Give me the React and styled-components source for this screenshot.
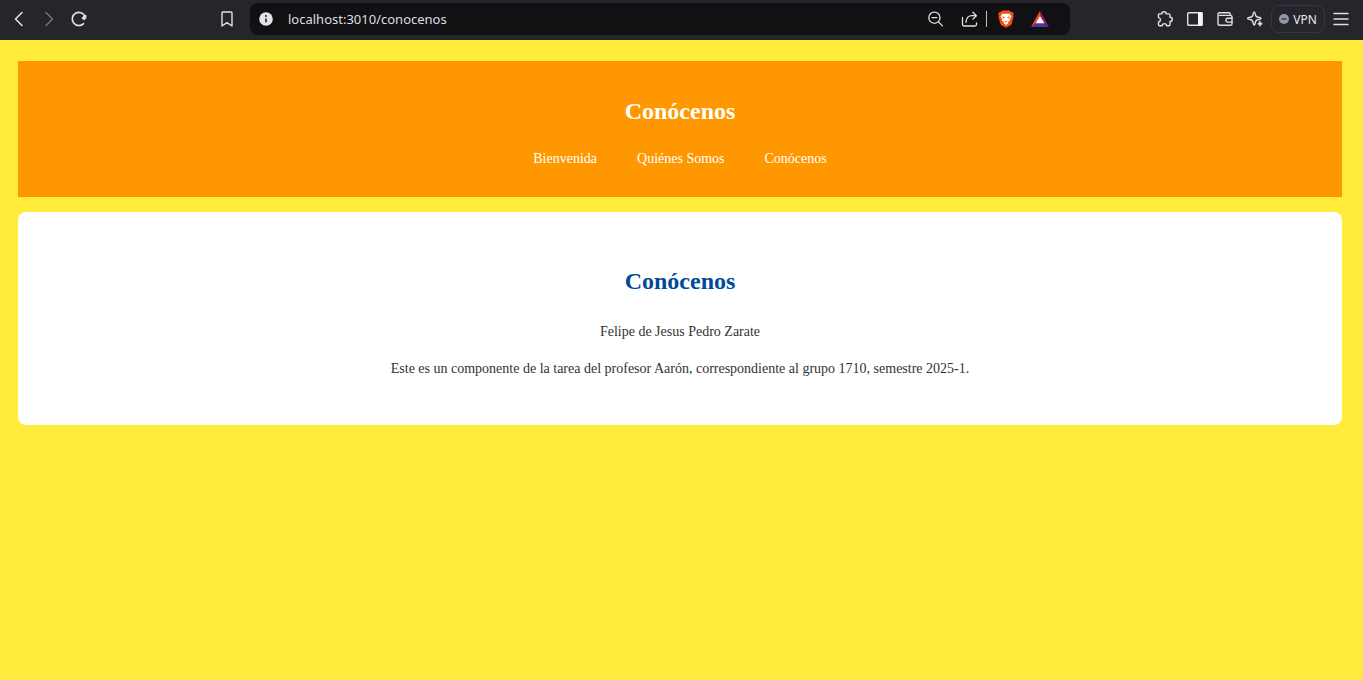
import React from 'react';
import styled, { createGlobalStyle } from 'styled-components';

const GlobalStyle = createGlobalStyle`
  *, *::before, *::after { box-sizing: border-box; }
  html { background: #ffeb3b; }
  body {
    margin: 0;
    background: #ffeb3b;
    color: #333;
    font-family: "Liberation Serif", "Times New Roman", serif;
    font-size: 14px;
  }
`;

const Toolbar = styled.div`
  display: grid;
  grid-template-columns: 250px minmax(0, 1fr) 293px;
  align-items: center;
  height: 40px;
  padding-bottom: 2px;
  background: #25252b;
  font-family: "Noto Sans", "Open Sans", sans-serif;
`;

const ToolGroup = styled.div`
  display: flex;
  align-items: center;
  justify-content: ${({ $end }) => ($end ? 'flex-end' : 'space-between')};
  padding: ${({ $end }) => ($end ? '0 7px 0 0' : '0 8px 0 4px')};
`;

const ToolSet = styled.div`
  display: flex;
`;

const IconButton = styled.button`
  display: flex;
  align-items: center;
  justify-content: center;
  flex: none;
  width: ${({ $wide }) => ($wide ? '34px' : '30px')};
  height: 30px;
  padding: 0;
  border: 0;
  background: none;
  color: ${({ $dim }) => ($dim ? '#74747a' : '#e0e0e4')};
  cursor: pointer;

  svg { display: block; }
`;

const AddressBar = styled.div`
  display: flex;
  align-items: center;
  height: 32px;
  padding: 0 13px 0 1px;
  border-radius: 8px;
  background: #111113;
`;

const AddressInput = styled.input`
  flex: 1;
  min-width: 0;
  height: 28px;
  padding: 0 7px;
  border: 0;
  outline: 0;
  background: none;
  color: #dedee2;
  font-family: inherit;
  font-size: 13px;
`;

const Divider = styled.span`
  width: 1px;
  height: 16px;
  margin-right: 2px;
  background: #b9b9bd;
`;

const VpnButton = styled.button`
  display: flex;
  align-items: center;
  justify-content: center;
  gap: 4px;
  width: 54px;
  height: 28px;
  margin: 0 1px;
  padding: 0;
  border: 1px solid #36363d;
  border-radius: 8px;
  background: none;
  color: #e8e8ec;
  font-family: inherit;
  font-size: 12px;
  cursor: pointer;
`;

const Page = styled.div`
  display: flex;
  flex-direction: column;
  gap: 15px;
  padding: 21px 21px 21px 18px;
`;

const Header = styled.header`
  padding: 36px 18px 27px;
  background: #ff9800;
  color: #fff;
  text-align: center;
`;

const Title = styled.h1`
  margin: 0 0 22px;
  color: inherit;
  font-size: 24px;
  line-height: 28px;
`;

const NavList = styled.ul`
  display: flex;
  justify-content: center;
  gap: 40px;
  margin: 0;
  padding: 0;
  list-style: none;
`;

const NavLink = styled.a`
  display: block;
  color: #fff;
  line-height: 23px;
  text-decoration: none;
`;

const Card = styled.main`
  padding: 55px 36px 45px;
  border-radius: 8px;
  background: #fff;
  text-align: center;
`;

const CardTitle = styled.h2`
  margin: 0 0 25px;
  color: #004a99;
  font-size: 24px;
  line-height: 28px;
`;

const Text = styled.p`
  margin: 0;
  line-height: 23px;

  & + & { margin-top: 14px; }
`;

function Icon({ children, size = 18, width = 1.4 }) {
  return (
    <svg width={size} height={size} viewBox="0 0 18 18" fill="none" stroke="currentColor"
      strokeWidth={width} strokeLinecap="round" strokeLinejoin="round" aria-hidden="true">
      {children}
    </svg>
  );
}

const links = [
  { label: 'Bienvenida', href: '/' },
  { label: 'Quiénes Somos', href: '/quienes-somos' },
  { label: 'Conócenos', href: '/conocenos' },
];

function BrowserBar() {
  return (
    <Toolbar>
      <ToolGroup>
        <ToolSet>
          <IconButton aria-label="Atrás">
            <Icon width={1.6}><path d="M12 2.5 5.5 9l6.500 6.500" /></Icon>
          </IconButton>
          <IconButton aria-label="Adelante" $dim>
            <Icon width={1.5}><path d="M6 2.500 12.500 9 6 15.500" /></Icon>
          </IconButton>
          <IconButton aria-label="Recargar">
            <Icon width={1.6}>
              <path d="M13.600 13.600A6.600 6.600 0 1 1 15 6.500" />
              <path d="M12.500 7.300 15.900 5v3.200l-1.400 1.500-2-.9z" fill="currentColor" strokeWidth="1" />
            </Icon>
          </IconButton>
        </ToolSet>
        <IconButton aria-label="Marcador">
          <Icon><path d="M4 2.800Q4 2 4.800 2h8.400q.8 0 .8.800v13.200L9 12.700 4 16z" /></Icon>
        </IconButton>
      </ToolGroup>

      <AddressBar>
        <IconButton aria-label="Información del sitio">
          <Icon>
            <circle cx="9" cy="9" r="6.800" fill="#e4e4e8" stroke="none" />
            <circle cx="9" cy="6" r="1" fill="#29292e" stroke="none" />
            <path d="M9 8.600v3.700" stroke="#29292e" strokeWidth="1.700" strokeLinecap="butt" />
          </Icon>
        </IconButton>
        <AddressInput aria-label="Dirección" defaultValue="localhost:3010/conocenos" />
        <IconButton aria-label="Reducir zoom" $wide>
          <Icon width={1.3}>
            <circle cx="8.400" cy="7.700" r="5.600" />
            <path d="m12.500 11.900 4 4M6 7.700h4.800" />
          </Icon>
        </IconButton>
        <IconButton aria-label="Compartir" $wide>
          <Icon width={1.3}>
            <path d="M2.500 7.500v7q0 1.500 1.500 1.500h11q1.500 0 1.500-1.500V13" />
            <path d="M6 12.300c0-4.300 2.500-6.600 6-6.600h4.400M12.900 2.300l3.500 3.400-3.500 3.400" />
          </Icon>
        </IconButton>
        <Divider />
        <IconButton aria-label="Brave Shields" $wide>
          <svg width="18" height="18" viewBox="0 0 18 18" aria-hidden="true">
            <path fill="#fb4b12" d="M5.500.5h7L14 2l1.600-.1 1.200 2-.6 1.400.4 1.200-1.900 7.100q-.3 1-1.200 1.600L9 17.700l-4.500-2.500q-.9-.6-1.200-1.600L1.400 6.500l.4-1.200-.6-1.400 1.200-2L4 2z" />
            <path fill="#fff" d="m5.600 3.500 1.800.5L9 3.600l1.600.4 1.800-.5 2 2.700-1.600 3.200.2 1.300-2.100 1.400.5.9L9 15l-2.400-2 .5-.9L5 10.700l.2-1.300-1.600-3.200z" />
            <path fill="#fb4b12" d="m5.200 6.500 2.600.6-.8 1.200-1.200-.4zM12.800 6.500l-2.600.6.8 1.200 1.200-.4zM7.500 10.500 9 11.500l1.500-1-.4 1.300L9 12.500l-1.100-.7z" />
          </svg>
        </IconButton>
        <IconButton aria-label="Brave Rewards" $wide>
          <svg width="18" height="18" viewBox="0 0 18 18" aria-hidden="true">
            <path fill="#ff4726" d="M9 1v5L4.800 13 0 17z" />
            <path fill="#9e1f63" d="M9 1v5l4.200 7 4.800 4z" />
            <path fill="#55309b" d="M0 17 4.800 13h8.400l4.800 4z" />
            <path fill="#fff" d="m9 6 4.400 7.300H4.600z" />
          </svg>
        </IconButton>
      </AddressBar>

      <ToolGroup $end>
        <IconButton aria-label="Extensiones">
          <Icon width={1.4}>
            <path d="M3.200 3.900h2.600C5.800 2.600 6.700 1.800 8 1.800s2.200.8 2.200 2.100h2.600q1.200 0 1.200 1.200v2.200c1.400 0 2.300.8 2.300 2.100s-.9 2.100-2.300 2.100v2.900q0 1.400-1.200 1.400h-2.200c-.1-1.400-.9-2.200-2.200-2.200s-2.100.8-2.200 2.200H3.700q-1.200 0-1.200-1.200V12c1.200-.2 2-1 2-2.200s-.8-2-2-2.200V5q0-1.100.7-1.100z" />
          </Icon>
        </IconButton>
        <IconButton aria-label="Panel lateral">
          <Icon>
            <rect x="1.700" y="2.700" width="14.300" height="12.600" rx="1" />
            <path d="M12 2H15.400q1.300 0 1.300 1.300v11.400q0 1.300-1.300 1.300H12z" fill="#f3f3f5" stroke="none" />
          </Icon>
        </IconButton>
        <IconButton aria-label="Cartera">
          <Icon>
            <path d="M14.300 5.300V4q0-1.300-1.300-1.300H3.500Q2 2.700 2 4v9.500q0 1.800 1.800 1.800h10.600q1.600 0 1.600-1.600V7q0-1.600-1.600-1.600H3.600" />
            <path d="M16 8.300h-4.500q-1.600.2-1.600 1.900t1.600 1.900H16" />
          </Icon>
        </IconButton>
        <IconButton aria-label="Asistente">
          <Icon>
            <path d="M8.200 1.900Q9 2 9.400 4.600 9.800 7 12.200 7.300 15 7.700 15 8.400T12.200 9.500Q9.800 9.900 9.400 12.200 9 15 8.200 15T7 12.200Q6.600 9.900 4.200 9.500 1.500 9.100 1.500 8.400T4.200 7.300Q6.600 7 7 4.600 7.400 2 8.200 1.900z" />
            <path d="M14 11.300q.4 2.100 2.400 2.500-2 .4-2.400 2.500-.4-2.100-2.400-2.500 2-.4 2.400-2.500z" fill="currentColor" strokeWidth=".8" />
          </Icon>
        </IconButton>
        <VpnButton>
          <svg width="10" height="10" viewBox="0 0 10 10" aria-hidden="true">
            <circle cx="5" cy="5" r="5" fill="#9294ac" />
            <path d="M2.500 5h5" stroke="#34343e" strokeWidth="1.400" />
          </svg>
          VPN
        </VpnButton>
        <IconButton aria-label="Menú">
          <Icon width={1.5}><path d="M2 3.500h14M2 9h14M2 14.500h14" /></Icon>
        </IconButton>
      </ToolGroup>
    </Toolbar>
  );
}

export default function App() {
  return (
    <>
      <GlobalStyle />
      <BrowserBar />
      <Page>
        <Header>
          <Title>Conócenos</Title>
          <nav>
            <NavList>
              {links.map(({ label, href }) => (
                <li key={href}><NavLink href={href}>{label}</NavLink></li>
              ))}
            </NavList>
          </nav>
        </Header>
        <Card>
          <CardTitle>Conócenos</CardTitle>
          <Text>Felipe de Jesus Pedro Zarate</Text>
          <Text>Este es un componente de la tarea del profesor Aarón, correspondiente al grupo 1710, semestre 2025-1.</Text>
        </Card>
      </Page>
    </>
  );
}
